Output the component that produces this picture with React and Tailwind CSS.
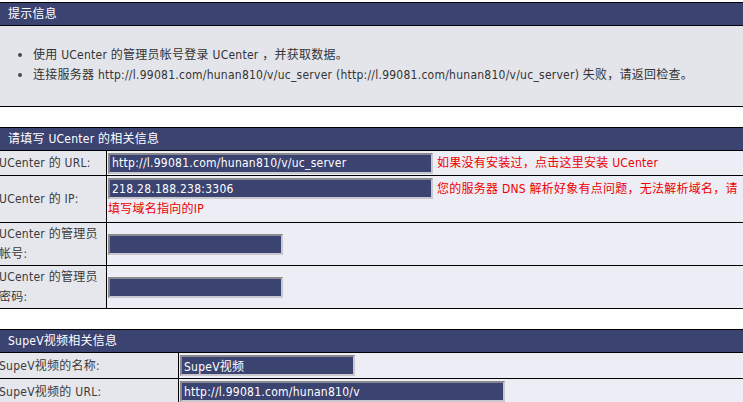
const font = 'font-["DejaVu_Sans_Condensed","Liberation_Sans","Noto_Sans_CJK_SC",sans-serif]'

function Header({ children }) {
  return (
    <div className="h-[23px] bg-[#3b4371] text-white pl-2 leading-[22px] border-b border-black whitespace-nowrap">
      {children}
    </div>
  )
}

function Field({ value = '', width }) {
  return (
    <input
      readOnly
      value={value}
      className={`${width} h-[21px] shrink-0 bg-[#3b4371] text-white text-[12px] tracking-[0.25px] px-[2px] border-2 border-t-[#8a8a8e] border-l-[#8a8a8e] border-r-[#c8c8ce] border-b-[#c8c8ce] outline-none`}
    />
  )
}

function Row({ h, labelW, label, children }) {
  return (
    <div className={`flex ${h} border-b border-black`}>
      <div className={`${labelW} shrink-0 flex items-center border-r border-black bg-[#e6e7ed] text-[#3a3a3a] leading-[20px] overflow-hidden`}>
        <div className="-ml-px whitespace-nowrap">{label}</div>
      </div>
      <div className="flex-1 flex items-center pl-[1px] bg-[#ededf5]">{children}</div>
    </div>
  )
}

export default function App() {
  return (
    <div className={`w-[743px] h-[402px] overflow-hidden bg-white text-[12px] tracking-[0.25px] ${font}`}>
      <div className="mt-[2px] border-t border-black">
        <Header>提示信息</Header>
        <div className="h-[81px] bg-[#e4e5eb] border-b border-black pt-[19px] text-[#333] leading-[20px] whitespace-nowrap">
          <div className="flex items-center">
            <span className="ml-[18px] w-[4px] h-[4px] rounded-full bg-[#4a4a4a]" />
            <span className="ml-[11px]">使用 UCenter 的管理员帐号登录 UCenter ，并获取数据。</span>
          </div>
          <div className="flex items-center">
            <span className="ml-[18px] w-[4px] h-[4px] rounded-full bg-[#4a4a4a]" />
            <span className="ml-[11px]">连接服务器 http://l.99081.com/hunan810/v/uc_server (http://l.99081.com/hunan810/v/uc_server) 失败，请返回检查。</span>
          </div>
        </div>
      </div>

      <div className="mt-[20px] border-t border-black">
        <Header>请填写 UCenter 的相关信息</Header>
        <Row h="h-[25px]" labelW="w-[107px]" label="UCenter 的 URL:">
          <Field width="w-[325px]" value="http://l.99081.com/hunan810/v/uc_server" />
          <span className="ml-[4px] text-[#e00] whitespace-nowrap">如果没有安装过，点击这里安装 UCenter</span>
        </Row>
        <Row h="h-[47px]" labelW="w-[107px]" label="UCenter 的 IP:">
          <div className="flex flex-col">
            <div className="flex items-center h-[21px]">
              <Field width="w-[325px]" value="218.28.188.238:3306" />
              <span className="ml-[4px] text-[#e00] whitespace-nowrap">您的服务器 DNS 解析好象有点问题，无法解析域名，请</span>
            </div>
            <div className="h-[21px] leading-[21px] text-[#e00]">填写域名指向的IP</div>
          </div>
        </Row>
        <Row h="h-[43px]" labelW="w-[107px]" label={<>UCenter 的管理员<br />帐号:</>}>
          <Field width="w-[175px]" />
        </Row>
        <Row h="h-[43px]" labelW="w-[107px]" label={<>UCenter 的管理员<br />密码:</>}>
          <Field width="w-[175px]" />
        </Row>
      </div>

      <div className="mt-[20px] border-t border-black">
        <Header>SupeV视频相关信息</Header>
        <Row h="h-[26px]" labelW="w-[179px]" label="SupeV视频的名称:">
          <Field width="w-[175px]" value="SupeV视频" />
        </Row>
        <Row h="h-[26px]" labelW="w-[179px]" label="SupeV视频的 URL:">
          <Field width="w-[325px]" value="http://l.99081.com/hunan810/v" />
        </Row>
      </div>
    </div>
  )
}
